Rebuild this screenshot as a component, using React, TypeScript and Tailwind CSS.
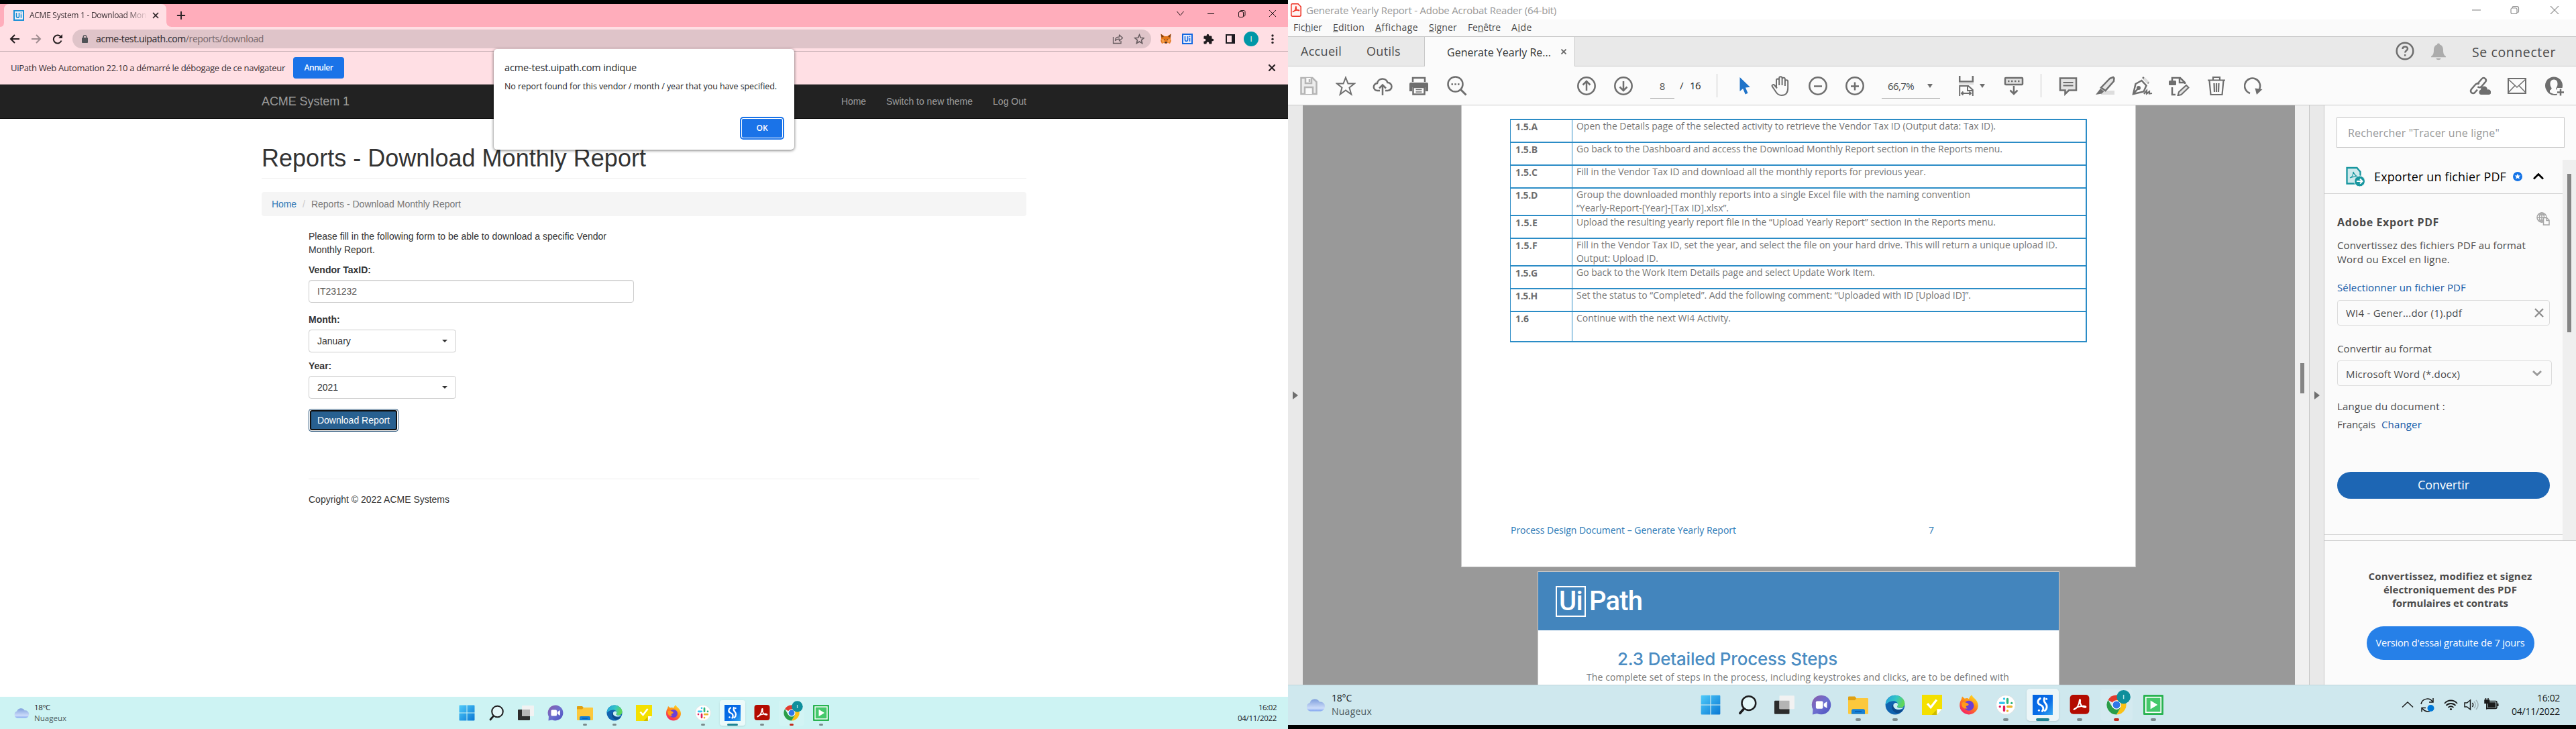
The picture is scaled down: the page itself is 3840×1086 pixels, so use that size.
import { useLayoutEffect, useRef, useState, type ReactNode } from "react";
import { X, Plus } from "lucide-react";

/* One line of text whose tracking is adjusted so that it spans `w` pixels. */
function T({ w, className = "", children }: { w: number; className?: string; children: ReactNode }) {
  const ref = useRef<HTMLSpanElement>(null);
  const [gap, setGap] = useState(0);
  useLayoutEffect(() => {
    const el = ref.current;
    if (!el) return;
    const n = Math.max(1, (el.textContent || "").length);
    setGap((w - el.getBoundingClientRect().width) / n);
  }, [w]);
  return (
    <span ref={ref} style={{ letterSpacing: gap }} className={"inline-block shrink-0 whitespace-nowrap " + className}>
      {children}
    </span>
  );
}

/* ---------- taskbar icons (24 unit grid) ---------- */
const ic = "h-full w-full block";
const StartIcon = () => (
  <svg viewBox="0 0 24 24" className={ic}>
    <defs>
      <linearGradient id="win" x1="0" y1="0" x2="1" y2="1">
        <stop offset="0" stopColor="#4fcbfa" />
        <stop offset="1" stopColor="#0a78d4" />
      </linearGradient>
    </defs>
    <path fill="url(#win)" d="M1.500.500h10v11h-11v-10a1 1 0 0 1 1-1zM12.500.500h10a1 1 0 0 1 1 1v10h-11zM.500 12.500h11v11h-10a1 1 0 0 1-1-1zM12.500 12.500h11v10a1 1 0 0 1-1 1h-10z" />
  </svg>
);
const SearchIcon = () => (
  <svg viewBox="0 0 24 24" className={ic} fill="none" stroke="#1d1d1f" strokeLinecap="round">
    <circle cx="13.500" cy="10" r="8.300" strokeWidth="2" fill="#e4f7f8" />
    <path d="M7.200 17.200l-4.200 4.800" strokeWidth="2.800" />
  </svg>
);
const TaskViewIcon = () => (
  <svg viewBox="0 0 24 24" className={ic}>
    <rect x="0" y="7" width="18" height="16" rx="1" fill="#2c2c2c" />
    <rect x="6" y="1" width="18" height="16" rx="1" fill="#f2f2f2" />
    <rect x="6" y="7" width="12" height="10" fill="#b4b4b4" />
  </svg>
);
const ChatIcon = () => (
  <svg viewBox="0 0 24 24" className={ic}>
    <defs>
      <linearGradient id="chat" x1="0" y1="0" x2="1" y2="1">
        <stop offset="0" stopColor="#8c5aa8" />
        <stop offset=".5" stopColor="#6d6fcf" />
        <stop offset="1" stopColor="#4a4fc0" />
      </linearGradient>
    </defs>
    <path fill="url(#chat)" d="M12 .5a11.500 11.500 0 1 1-5 21.900L1.500 23.500 2 17.500A11.500 11.500 0 0 1 12 .5z" />
    <rect x="5.500" y="7.500" width="8.500" height="9" rx="1.500" fill="#fff" />
    <path fill="#fff" d="M15 10.500l3.800-2.500v8L15 13.500z" />
  </svg>
);
const FolderIcon = () => (
  <svg viewBox="0 0 24 24" className={ic}>
    <path fill="#e0a011" d="M0 3a1 1 0 0 1 1-1h7l2.500 3L8 7H0z" />
    <path fill="#fcc83c" d="M0 6.500h8L10 4h13a1 1 0 0 1 1 1v17a1 1 0 0 1-1 1H1a1 1 0 0 1-1-1z" />
    <path fill="#1581d6" d="M4 23v-4a2 2 0 0 1 2-2h12a2 2 0 0 1 2 2v4z" />
    <path fill="#0b5cab" d="M8 19.500h8v1.300H8z" />
  </svg>
);
const EdgeIcon = () => (
  <svg viewBox="0 0 24 24" className={ic}>
    <defs>
      <linearGradient id="edge" x1="0" y1="0" x2="1" y2=".3">
        <stop offset="0" stopColor="#1f9fe0" />
        <stop offset=".6" stopColor="#35c7c4" />
        <stop offset="1" stopColor="#5fd65a" />
      </linearGradient>
    </defs>
    <circle cx="12" cy="12" r="11.500" fill="#1063b0" />
    <path fill="url(#edge)" d="M.6 12C.6 5.500 5.600.5 12 .5S23.500 5.300 23.500 10.200c0 3.400-2.500 5.300-5.600 5.300-2.300 0-3.900-.9-3.500-1.700.4-.7.900-1.200.9-2.400 0-2.100-2.200-4-5.200-4C5.200 7.400 1.600 10.600.6 12z" />
    <path fill="#0c4a8c" d="M8.500 11.500c-1.500 4 .5 8.500 5 10.200 3.500.6 6.500-1.700 8.300-4.200-5 2.300-10.800.5-11.600-4.800z" />
    <path fill="#cdf0f2" d="M12.500 9.600c-1.800.5-3 2-2.600 4 .5 3 4.600 4.600 8.200 3.800 1.600-.3 3.200-1 4.400-2.200-2.600 1-8.600 1-8.100-1.400.5-.8 1-1.300.9-2.400-.1-1-.9-2.100-2.800-1.800z" />
  </svg>
);
const NoteIcon = () => (
  <svg viewBox="0 0 24 24" className={ic}>
    <path fill="#f4e000" d="M0 0h24v17l-6 7H0z" />
    <path fill="#fff" d="M18 24v-7h6z" />
    <path fill="#cdbb00" d="M11.500 24l6-6v6z" />
    <path d="M6.500 10.500l4 4.500 7-9" fill="none" stroke="#fff" strokeWidth="2.600" />
  </svg>
);
const FirefoxIcon = () => (
  <svg viewBox="0 0 24 24" className={ic}>
    <defs>
      <linearGradient id="ff" x1=".8" y1="0" x2=".2" y2="1">
        <stop offset="0" stopColor="#ffe226" />
        <stop offset=".45" stopColor="#ff8a16" />
        <stop offset="1" stopColor="#f5156c" />
      </linearGradient>
    </defs>
    <path fill="url(#ff)" d="M3 5.500L4 2l3 2.500c2.500-.9 4-.3 5 .5C12.500 3 14 1 15.500 0c.3 3.500 7 5 7.500 12.500A11 11 0 1 1 1 12.500c0-3 .8-5.500 2-7z" />
    <circle cx="12" cy="13" r="6" fill="#6b3fd6" />
    <path fill="#ff9b1a" d="M3.500 9.500c3-1.500 5.500 0 7.500 1 1.500.7.500 2.500-1.500 2.700-1.500.3-1 2.300 1 2.800-3 1.500-8-.5-7-6.500z" />
  </svg>
);
const SlackIcon = () => (
  <svg viewBox="0 0 24 24" className={ic}>
    <circle cx="12" cy="12" r="11.500" fill="#fff" stroke="#d9d9d9" strokeWidth=".6" />
    <g strokeWidth="2.700" strokeLinecap="round">
      <path stroke="#36c5f0" d="M10 4.800v0M5.200 9.800h4.600" />
      <path stroke="#2eb67d" d="M14 5.200v4.600M19 9.900v0" />
      <path stroke="#ecb22e" d="M14 19.200v0M14.200 14.200h4.600" />
      <path stroke="#e01e5a" d="M10 14.200v4.600M5 14.100v0" />
    </g>
  </svg>
);
const StudioIcon = () => (
  <svg viewBox="0 0 24 24" className={ic}>
    <defs>
      <linearGradient id="st" x1="0" y1="0" x2="1" y2="1">
        <stop offset="0" stopColor="#0062e0" />
        <stop offset=".6" stopColor="#0a6fe8" />
        <stop offset="1" stopColor="#35a8f2" />
      </linearGradient>
    </defs>
    <rect width="24" height="24" fill="url(#st)" />
    <path d="M9 4.500C6 6 5 10.500 9 12s4.500 5 2.500 7.500M14 4c-1 3 0 5 1.500 6.500s2.500 6-1 8.500" fill="none" stroke="#fff" strokeWidth="2.300" strokeLinecap="round" />
    <circle cx="16.500" cy="5" r="1.200" fill="#fff" />
    <circle cx="7.500" cy="18.500" r="1.200" fill="#fff" />
  </svg>
);
const AcroMark = ({ color = "#fff", w = 1.6 }: { color?: string; w?: number }) => (
  <path d="M5.500 17.500c3-1 6-5.500 6.300-10.500.1-2 1.400-1.500 1 .3-1.200 3.700 2.700 8.200 6.200 7.700 1.500-.6-.3-2-3-1.600-4 .4-7.500 1.600-9.800 3.200-1 .8-1.200 1.200-.7.900z" fill="none" stroke={color} strokeWidth={w} strokeLinejoin="round" />
);
const AcrobatIcon = () => (
  <svg viewBox="0 0 24 24" className={ic}>
    <rect x=".5" y="0" width="23" height="23" rx="4" fill="#b30b00" />
    <AcroMark />
  </svg>
);
const ChromeIcon = () => (
  <svg viewBox="0 0 24 24" className={ic + " overflow-visible"}>
    <path fill="#e33b2e" d="M12 12L2 6.200A11.500 11.500 0 0 1 22 6.200z" />
    <path fill="#e33b2e" d="M12 .5a11.500 11.500 0 0 1 10 5.700H12z" />
    <path fill="#fbc116" d="M22 6.200A11.500 11.500 0 0 1 12 23.500l5-8.500-5-8.800z" />
    <path fill="#2a9d48" d="M2 6.200A11.500 11.500 0 0 0 12 23.500l5-8.600-10-.1z" />
    <circle cx="12" cy="12" r="5.500" fill="#fff" />
    <circle cx="12" cy="12" r="4.400" fill="#2f77e8" />
    <circle cx="20.500" cy="2.500" r="8.200" fill="#0e8f9c" />
    <path d="M20.500 0v5" stroke="#b5e3e6" strokeWidth="1.200" />
  </svg>
);
const AssistantIcon = () => (
  <svg viewBox="0 0 24 24" className={ic}>
    <rect width="24" height="24" rx="1" fill="#28b351" />
    <rect x="3" y="3" width="18" height="18" fill="#45c86b" stroke="#fff" strokeWidth="1.400" />
    <path fill="#fff" d="M8.500 6.800l8.500 5.200-8.500 5.200z" />
  </svg>
);

type Dot = "idle" | "active" | "alert";
const apps: { Icon: () => ReactNode; dot?: Dot; tile?: string }[] = [
  { Icon: StartIcon },
  { Icon: SearchIcon },
  { Icon: TaskViewIcon },
  { Icon: ChatIcon },
  { Icon: FolderIcon, dot: "idle" },
  { Icon: EdgeIcon, dot: "idle" },
  { Icon: NoteIcon },
  { Icon: FirefoxIcon },
  { Icon: SlackIcon, dot: "idle" },
  { Icon: StudioIcon, dot: "active", tile: "bg-white/60 shadow-sm" },
  { Icon: AcrobatIcon, dot: "idle" },
  { Icon: ChromeIcon, dot: "alert", tile: "bg-white/10" },
  { Icon: AssistantIcon, dot: "idle" },
];
const dotSmall: Record<Dot, string> = {
  idle: "h-[3px] w-1.5 bg-[#7b8a8c]",
  active: "h-[3px] w-4 bg-[#1f8494]",
  alert: "h-[3px] w-1.5 bg-[#c42b1c]",
};
const dotBig: Record<Dot, string> = {
  idle: "h-1 w-2 bg-[#7b8a8c]",
  active: "h-1 w-5 bg-[#1f8494]",
  alert: "h-1 w-2 bg-[#c42b1c]",
};

function AppIcons({ big = false }: { big?: boolean }) {
  return (
    <div className="flex h-full">
      {apps.map(({ Icon, dot, tile = "" }, i) => (
        <div key={i} className={big ? "flex w-[55px] justify-center pt-1.5" : "flex w-11 justify-center pt-[5px]"}>
          <div className={(big ? "h-12 w-12 rounded-[5px] pt-[9px] " : "h-[38px] w-[38px] rounded-[4px] pt-[7px] ") + "relative flex justify-center " + tile}>
            <div className={big ? "h-[30px] w-[30px]" : "h-6 w-6"}>
              <Icon />
            </div>
            {dot && <div className={"absolute bottom-0 rounded-full " + (big ? dotBig[dot] : dotSmall[dot])} />}
          </div>
        </div>
      ))}
    </div>
  );
}

const CloudWeather = ({ className }: { className: string }) => (
  <svg viewBox="0 0 30 20" className={className}>
    <defs>
      <linearGradient id="cl" x1="0" y1="0" x2="0" y2="1">
        <stop offset="0" stopColor="#7f9fdd" />
        <stop offset=".75" stopColor="#cdddfa" />
        <stop offset="1" stopColor="#7ea2ef" />
      </linearGradient>
    </defs>
    <path fill="url(#cl)" d="M7 19.500a6.500 6.500 0 0 1-.5-12.500A8 8 0 0 1 21 5.500a7 7 0 0 1 2 14z" />
  </svg>
);

/* ---------- browser ---------- */
const UiBadge = ({ fg, bg }: { fg: string; bg: string }) => (
  <svg viewBox="0 0 16 16" className="h-4 w-4 shrink-0">
    <rect x="1" y="1" width="14" height="14" fill={bg} stroke={fg} strokeWidth="2" />
    <path d="M4.500 4v5.200a2 2 0 0 0 4 0V4M11.500 6.300v5.500M11.500 3.500v1.500" fill="none" stroke={fg} strokeWidth="1.600" />
  </svg>
);

function TabStrip() {
  return (
    <div className="flex h-[34px] bg-[#ffadbb]">
      <div className="relative h-[34px] w-[256px]">
        <svg viewBox="0 0 256 34" className="absolute inset-0 h-full w-full">
          <path fill="#ffdfe4" d="M0 34c5 0 6-3 6-8V8c0-5 3-8 8-8h226c5 0 8 3 8 8v18c0 5 3 8 8 8z" />
        </svg>
        <div className="relative flex h-[34px] items-center pl-5">
          <UiBadge fg="#1a8fd6" bg="#f3eef5" />
          <div className="ml-2 w-[175px] overflow-hidden text-[12px] leading-[20px] text-[#3c3135] [mask-image:linear-gradient(to_right,#000_145px,transparent_176px)]">
            <T w={174}>ACME System 1 - Download Mon</T>
          </div>
          <X className="ml-[6px] h-[14px] w-[14px] text-[#2b2326]" strokeWidth={3} />
        </div>
      </div>
      <Plus className="ml-[5px] mt-2 h-[18px] w-[18px] text-[#2b2326]" strokeWidth={2.6} />
      <svg viewBox="0 0 160 12" className="ml-[1471px] mt-[8px] h-3 w-[160px]" fill="none" stroke="#1c1214">
        <path d="M4.500 3l5 6 5-6" />
        <path d="M50 6.500h10" />
        <rect x="96.500" y="3.500" width="7" height="8" rx="1.500" />
        <path d="M98.500 3.500c0-1.500.5-2 1.500-2h4c1 0 2 .5 2 2v5c0 1-.5 1.500-2 1.500" />
        <path d="M142 1l10 10M152 1l-10 10" />
      </svg>
    </div>
  );
}

function BrowserToolbar() {
  return (
    <div className="flex h-[37px] items-center border-b border-[#ccb3b8] bg-[#ffdfe4]">
      <svg viewBox="0 0 80 16" className="ml-[14px] h-4 w-20 shrink-0" fill="none" stroke="#221b1d" strokeWidth="2">
        <path d="M8 2L2 8l6 6M2 8h13" />
        <path d="M40 2l6 6-6 6M46 8H33" stroke="#a08d91" />
        <path d="M77.500 10.500A6 6 0 1 1 77 5.500" />
        <path d="M79 1v6h-6z" fill="#221b1d" stroke="none" />
      </svg>
      <div className="ml-[14px] flex h-7 w-[1608px] shrink-0 items-center rounded-full bg-[#dfc4c9] pl-[14px]">
        <svg viewBox="0 0 9 12" className="h-3 w-[9px]">
          <rect y="4" width="9" height="8" rx="1" fill="#4f5256" />
          <path d="M2.200 5V3a2.300 2.300 0 0 1 4.600 0v2" fill="none" stroke="#4f5256" strokeWidth="1.300" />
        </svg>
        <T w={250} className="ml-[12px] text-[14px] leading-6 text-[#74666a]">
          <span className="text-[#27262b]">acme-test.uipath.com</span>/reports/download
        </T>
        <svg viewBox="0 0 48 16" className="ml-[1265px] h-4 w-12" fill="none" stroke="#655a5e" strokeWidth="1.300">
          <path d="M1.500 5v9.500h11.500V11" />
          <path d="M4.500 10.500c0-4 2.500-5.500 6-5.500V2l5 4.500-5 4.500V8c-3 0-4.500 1-6 2.500z" strokeLinejoin="round" />
          <path d="M40.500 1.800l1.900 4.500 4.800.4-3.700 3.100 1.200 4.700-4.200-2.500-4.200 2.500 1.200-4.700-3.700-3.100 4.800-.4z" strokeWidth="1.600" />
        </svg>
      </div>
      <svg viewBox="0 0 16 16" className="ml-[14px] h-4 w-4 shrink-0">
        <path fill="#e2761b" d="M.5.5L6 4h4L15.500.5 15 7l.8 4L14 15l-3.500-1.200-1 1.200h-3l-1-1.200L2 15 .2 11 1 7z" />
        <path fill="#7a3f14" d="M.5.5L5 4.500 1.500 6zM15.500.5L11 4.500 14.500 6z" />
        <path fill="#f5a04e" d="M1 8l4 .5L6 13l-3 1zM15 8l-4 .5L10 13l3 1z" />
        <path fill="#2b2b38" d="M4.500 8.200l2 .3-.5 1zM11.500 8.200l-2 .3.500 1zM6.500 12.500h3v1.700h-3z" />
      </svg>
      <div className="ml-4">
        <UiBadge fg="#1467e0" bg="#e9edfb" />
      </div>
      <svg viewBox="0 0 24 24" className="ml-[15px] h-[17px] w-[17px] shrink-0" fill="#1f1b1e">
        <path d="M20.500 11H19V7c0-1.100-.9-2-2-2h-4V3.500a2.500 2.500 0 0 0-5 0V5H4c-1.100 0-2 .9-2 2v3.800h1.500a2.700 2.700 0 0 1 0 5.400H2V20c0 1.100.9 2 2 2h3.800v-1.500a2.700 2.700 0 0 1 5.400 0V22H17c1.100 0 2-.9 2-2v-4h1.500a2.500 2.500 0 0 0 0-5z" />
      </svg>
      <svg viewBox="0 0 14 14" className="ml-[17px] h-[14px] w-[14px] shrink-0">
        <path d="M1 1h12v12H1z" fill="none" stroke="#1c1a20" strokeWidth="2" />
        <path d="M9 0h5v14H9z" fill="#1c1a20" />
      </svg>
      <div className="ml-[13px] flex h-[22px] w-[22px] shrink-0 items-center justify-center rounded-full bg-[#0097a7] text-[11px] text-white">I</div>
      <svg viewBox="0 0 4 16" className="ml-[19px] h-4 w-1 shrink-0" fill="#241f22">
        <circle cx="2" cy="3" r="1.700" />
        <circle cx="2" cy="8.200" r="1.700" />
        <circle cx="2" cy="13.400" r="1.700" />
      </svg>
    </div>
  );
}

function Select({ value }: { value: string }) {
  return (
    <div className="flex h-[34px] w-[220px] items-center justify-between rounded-[4px] border border-[#ccc] bg-white pl-3 pr-3 text-[#333]">
      {value}
      <span className="border-x-4 border-t-4 border-x-transparent border-t-[#333]" />
    </div>
  );
}

function BrowserWindow() {
  return (
    <div className="relative flex h-[1086px] w-[1920px] shrink-0 flex-col bg-black pt-1.5">
      <TabStrip />
      <BrowserToolbar />
      <div className="flex h-[49px] items-center border-b border-[#ccb3b8] bg-[#ffdfe4] pl-4 text-[13px] text-[#3a3034]">
        <T w={409} className="leading-6">UiPath Web Automation 22.10 a démarré le débogage de ce navigateur</T>
        <div className="ml-3 flex h-8 w-[76px] items-center justify-center rounded-[4px] bg-[#1a73e8] text-[12px] font-semibold text-white">
          <T w={43}>Annuler</T>
        </div>
        <X className="ml-[1375px] h-4 w-4 text-[#241d20]" strokeWidth={3.2} />
      </div>
      <nav className="flex h-[51px] items-center border-b border-[#080808] bg-[#222] pl-[390px] font-['Liberation_Sans',Arial,sans-serif] text-sm text-[#9d9d9d]">
        <T w={131} className="text-lg leading-5">ACME System 1</T>
        <T w={37} className="ml-[733px]">Home</T>
        <T w={129} className="ml-[30px]">Switch to new theme</T>
        <T w={50} className="ml-[30px]">Log Out</T>
      </nav>
      <main className="h-[861px] bg-white pl-[390px] pt-[39px] font-['Liberation_Sans',Arial,sans-serif] text-sm leading-5 text-[#333]">
        <div className="h-[50px] w-[1140px] border-b border-[#eee]">
          <h1 className="text-[36px] leading-10">
            <T w={573}>Reports - Download Monthly Report</T>
          </h1>
        </div>
        <div className="mt-5 flex h-9 w-[1140px] items-center rounded-[4px] bg-[#f5f5f5] px-[15px] text-[#777]">
          <T w={37} className="text-[#337ab7]">Home</T>
          <span className="mx-[9px] text-[#ccc]">/</span>
          <T w={223}>Reports - Download Monthly Report</T>
        </div>
        <div className="ml-[70px] mt-5 w-[1000px]">
          <T w={444}>Please fill in the following form to be able to download a specific Vendor</T>
          <p>Monthly Report.</p>
          <p className="mt-2.5 font-bold"><T w={93}>Vendor TaxID:</T></p>
          <div className="mt-[5px] flex h-[34px] w-[485px] items-center rounded-[4px] border border-[#ccc] px-3 text-[#555] shadow-[inset_0_1px_1px_rgba(0,0,0,0.075)]">
            IT231232
          </div>
          <p className="mb-[5px] mt-[15px] font-bold">Month:</p>
          <Select value="January" />
          <p className="mb-[5px] mt-2.5 font-bold">Year:</p>
          <Select value="2021" />
          <div className="mt-[15px] h-[34px] w-[134px] rounded-[4px] border border-[#204d74] bg-white p-px">
            <div className="flex h-full items-center justify-center rounded-[3px] border-2 border-[#101010] bg-[#286090] text-white">
              <T w={108}>Download Report</T>
            </div>
          </div>
          <div className="mt-[70px] h-px bg-[#eee]" />
          <p className="mt-5"><T w={210}>Copyright © 2022 ACME Systems</T></p>
        </div>
      </main>
      <footer className="flex h-12 items-center bg-[#cdf3f3] text-[12px]">
        <div className="flex w-[674px] items-center pl-5">
          <CloudWeather className="h-4 w-6" />
          <div className="ml-[7px] flex flex-col items-start leading-4 text-[#1c2223]">
            <T w={24} className="text-[11.5px]">18°C</T>
            <T w={48} className="text-[11.5px] text-[#4b5a5b]">Nuageux</T>
          </div>
        </div>
        <AppIcons />
        <div className="ml-auto flex flex-col items-end pr-[17px] leading-4 text-[#1c2223]">
          <T w={27} className="text-[11.5px]">16:02</T>
          <T w={58} className="text-[11.5px]">04/11/2022</T>
        </div>
      </footer>

      <div className="absolute left-[736px] top-[73px] flex h-[150px] w-[448px] flex-col items-start rounded-[5px] bg-white px-4 pt-[17px] text-[#26272a] shadow-[0_1px_4px_rgba(0,0,0,0.6)]">
        <T w={197} className="text-[14.5px] leading-[22px]">acme-test.uipath.com indique</T>
        <T w={406} className="mt-[6px] text-[12.5px] leading-[22px]">No report found for this vendor / month / year that you have specified.</T>
        <div className="ml-auto mr-[-1px] mt-[34px] h-[34px] w-[66px] rounded-[5px] border-2 border-[#1a73e8] bg-white p-px">
          <div className="flex h-full items-center justify-center rounded-[2px] bg-[#1a73e8] text-[12px] font-semibold text-white">
            <T w={17}>OK</T>
          </div>
        </div>
      </div>
    </div>
  );
}

/* ---------- PDF reader ---------- */
const tb = "shrink-0 block";
const G = "#6e6e6e";
const stroke = { fill: "none", stroke: G, strokeWidth: 2.5 };

function ReaderToolbar() {
  return (
    <div className="flex h-[58px] items-center border-b border-[#c8c8c8] bg-[#fbfbfb]">
      <svg viewBox="0 0 26 28" className={tb + " ml-[18px] h-7 w-[26px]"} fill="none" stroke="#b5b5b5" strokeWidth="2.500">
        <path d="M1.500 2h17l6 6v18h-23z" fill="#ededed" />
        <path d="M8 2v8h9V2M14 4v4M7 26V16h12v10" fill="#fbfbfb" />
      </svg>
      <svg viewBox="0 0 30 30" className={tb + " ml-[27px] h-[30px] w-[30px]"} {...stroke} strokeWidth="2">
        <path d="M15 2.500l3.500 9h9.500l-7.500 6 2.800 10L15 21.500l-8.300 6 2.800-10L2 11.500h9.500z" />
      </svg>
      <svg viewBox="0 0 30 30" className={tb + " ml-[25px] h-[30px] w-[30px]"} {...stroke}>
        <path d="M11 22H7.500a5.500 5.500 0 0 1-.5-11 8 8 0 0 1 15.500-1A6 6 0 0 1 22.500 22H19" />
        <path d="M15 29V14M10 18.500l5-5 5 5" />
      </svg>
      <svg viewBox="0 0 28 28" className={tb + " ml-[25px] h-7 w-7"}>
        <path d="M5 8V2h18v6" {...stroke} />
        <path d="M0 11a2 2 0 0 1 2-2h24a2 2 0 0 1 2 2v11h-4v-6H4v6H0z" fill={G} />
        <path d="M5.500 16h17v10.500h-17z" {...stroke} />
        <path d="M9.500 19.500h9M9.500 23h9" stroke={G} strokeWidth="1.500" />
      </svg>
      <svg viewBox="0 0 30 30" className={tb + " ml-[28px] h-[30px] w-[30px]"} {...stroke}>
        <circle cx="12.500" cy="12.500" r="11" />
        <path d="M20.500 20.500l8 8" strokeWidth="3" />
        <path d="M6.500 12.500h2.500M11.300 12.500h2.500M16 12.500h2.500" strokeWidth="2.600" />
      </svg>
      <svg viewBox="0 0 30 30" className={tb + " ml-[163px] h-[30px] w-[30px]"} {...stroke}>
        <circle cx="15" cy="15" r="12.700" />
        <path d="M15 22V9M9.500 13.500L15 8l5.500 5.500" />
      </svg>
      <svg viewBox="0 0 30 30" className={tb + " ml-[25px] h-[30px] w-[30px]"} {...stroke}>
        <circle cx="15" cy="15" r="12.700" />
        <path d="M15 8v13M9.500 16.500L15 22l5.500-5.500" />
      </svg>
      <div className="ml-[25px] mt-[2px] flex h-9 w-9 shrink-0 items-center justify-center border-b border-[#b5b5b5] pb-2 pt-2 text-[15px] text-[#555]">
        8
      </div>
      <span className="ml-2 w-[6px] text-[15px] text-[#333]">/</span>
      <T w={16} className="ml-[9px] text-[15px] text-[#222]">16</T>
      <div className="ml-[24px] h-[35px] w-px shrink-0 bg-[#c4c4c4]" />
      <svg viewBox="0 0 18 28" className={tb + " ml-[32px] h-7 w-[18px]"}>
        <path d="M1.500 1v21l4.700-4 3.500 8.500 3.800-1.700L10 16.500l6.800-.7z" fill="#2074c9" />
      </svg>
      <svg viewBox="0 0 30 30" className={tb + " ml-[30px] h-[30px] w-[30px]"} {...stroke} strokeWidth="2">
        <path d="M8 16.500V6.500a2 2 0 0 1 4.200 0V14M12.200 14V3.500a2 2 0 0 1 4.400 0V14M16.600 14V5a2 2 0 0 1 4.300 0v10M20.900 15V8.500a2 2 0 0 1 4.300 0V18c0 7-3.500 11-9.500 11-5 0-7-2.500-9-6l-5-7.500c-.8-2 2-3.300 3.500-1.500L9 18.500" />
      </svg>
      <svg viewBox="0 0 30 30" className={tb + " ml-[25px] h-[30px] w-[30px]"} {...stroke}>
        <circle cx="15" cy="15" r="12.700" />
        <path d="M9 15.500h12" />
      </svg>
      <svg viewBox="0 0 30 30" className={tb + " ml-[25px] h-[30px] w-[30px]"} {...stroke}>
        <circle cx="15" cy="15" r="12.700" />
        <path d="M9 15.500h12M15 9.500v12" />
      </svg>
      <div className="ml-[25px] mt-[2px] flex h-9 w-[87px] shrink-0 items-center border-b border-[#b5b5b5] pl-[9px] text-[15px] text-[#4a4a4a]">
        <T w={39}>66,7%</T>
        <span className="ml-[20px] border-x-[4.5px] border-t-[6px] border-x-transparent border-t-[#6e6e6e]" />
      </div>
      <svg viewBox="0 0 24 30" className={tb + " ml-[27px] h-[30px] w-6"} {...stroke}>
        <path d="M2.200 0v8.500h19.600V0" />
        <path d="M1 11h22v2H1z" fill="#ddd" stroke="none" />
        <path d="M2.200 30V15h13l6.600 6v9M14 15v7h8M5 26h14M7.500 23.500L5 26l2.500 2.500M16.500 23.500L19 26l-2.500 2.500" strokeWidth="2" />
      </svg>
      <span className="ml-2 border-x-4 border-t-[6px] border-x-transparent border-t-[#6e6e6e]" />
      <svg viewBox="0 0 30 30" className={tb + " ml-[28px] h-[30px] w-[30px]"} {...stroke}>
        <rect x="2" y="3" width="26" height="10" rx="1" fill="#e0e0e0" />
        <path d="M6 8h2.500M11 8h2.500M16 8h2.500M21 8h2.500" />
        <path d="M15 15v12M9.500 21.500L15 27l5.500-5.500" />
      </svg>
      <div className="ml-[25px] h-[35px] w-px shrink-0 bg-[#c4c4c4]" />
      <svg viewBox="0 0 28 30" className={tb + " ml-[26px] h-[30px] w-7"} {...stroke}>
        <path d="M2 3.500h24v18H15L9.500 27v-5.500H2z" fill="#e4e4e4" />
        <path d="M6.500 10h15M6.500 14.500h15" strokeWidth="1.800" />
      </svg>
      <svg viewBox="0 0 30 30" className={tb + " ml-[26px] h-[30px] w-[30px]"} {...stroke}>
        <path d="M9 28v-2l6-4h14v6z" fill="#ddd" stroke="none" />
        <path d="M22 4l5-2 1.500 1.500L28 8 15.500 22 9 17.500z" fill="#e4e4e4" />
        <path d="M8 19l5.500 4-3.500 3.500-9 1.500z" fill={G} stroke="none" />
      </svg>
      <svg viewBox="0 0 32 30" className={tb + " ml-[24px] h-[30px] w-8"} {...stroke}>
        <path d="M17 2l9 9" />
        <path d="M18 5l5 6 4-2-7-7z" fill="#ddd" stroke="none" />
        <path d="M15.500 7l7 7.500-4 9L3 27 6.500 12z" />
        <path d="M3 27l7-8" />
        <circle cx="11" cy="18" r="1.800" fill={G} />
        <path d="M19 27l4-5v4.500l4-3v3l4-.5" strokeWidth="2.200" />
      </svg>
      <svg viewBox="0 0 32 30" className={tb + " ml-[23px] h-[30px] w-8"} {...stroke}>
        <path d="M6 8V3h12l7 7v2M17 3v7h8M6 17v11h5" />
        <rect x="1" y="7" width="11" height="7" rx="1.500" fill={G} stroke="none" />
        <path d="M16 24l11-10 3.500 3.500L19.500 28l-5 1.200z" fill="#e4e4e4" strokeWidth="2" />
      </svg>
      <svg viewBox="0 0 28 30" className={tb + " ml-[26px] h-[30px] w-7"} {...stroke}>
        <path d="M1 6.500h26M9 6V2h10v4M3.500 7l2 21h17l2-21M10.500 11l.5 13M14 11v13M17.500 11l-.5 13" strokeWidth="2.200" />
      </svg>
      <svg viewBox="0 0 28 28" className={tb + " ml-[27px] h-7 w-7"} {...stroke}>
        <path d="M9 25A11.500 11.500 0 1 1 23 19" />
        <path d="M16.500 17.500l11 1.500-8.500 8z" fill={G} stroke="none" />
      </svg>
      <svg viewBox="0 0 32 30" className={tb + " ml-[308px] h-[30px] w-8"} {...stroke}>
        <path d="M12 12l6.500-7.500c3-3.500 8.500.5 5.500 4.500l-6 7c-2 2-4.500 1.500-5.500 0" />
        <path d="M14.500 12.500c-1-1.500-3.500-1.500-5.500.5l-6 7c-3 4 2.500 8.500 5.500 4.500l3.500-4" />
        <path d="M17 28a4 4 0 0 1 0-7.500 5 5 0 0 1 10 0 3.800 3.800 0 0 1 2.500 7.500z" fill={G} stroke="none" />
      </svg>
      <svg viewBox="0 0 30 24" className={tb + " ml-[24px] h-6 w-[30px]"} {...stroke} strokeWidth="2">
        <rect x="2" y="1" width="26" height="22" />
        <path d="M2 2l13 12L28 2M2 22l10-10.500M28 22l-10-10.500" strokeWidth="1.500" />
      </svg>
      <svg viewBox="0 0 30 30" className={tb + " ml-[26px] h-[30px] w-[30px]"}>
        <circle cx="14" cy="14.500" r="13" fill={G} />
        <path d="M14 5.500c4 0 5.500 3 5.500 6.500 0 3-1 4.500-2 6-.5 1.500.5 2.500 2.500 3.500v8H8v-8c2-1 3-2 2.500-3.500-1-1.500-2-3-2-6 0-3.500 1.500-6.500 5.500-6.500z" fill="#fbfbfb" />
        <path d="M5 23c5 6 13 6 17 3" {...stroke} strokeWidth="2" />
        <path d="M19 18h11v12H19z" fill="#fbfbfb" />
        <path d="M24 19.500v10M19 24.500h10" {...stroke} />
      </svg>
    </div>
  );
}

const steps: { id: string; h: string; lines: [string, number][] }[] = [
  { id: "1.5.A", h: "h-[34px]", lines: [["Open the Details page of the selected activity to retrieve the Vendor Tax ID (Output data: Tax ID).", 625]] },
  { id: "1.5.B", h: "h-[34px]", lines: [["Go back to the Dashboard and access the Download Monthly Report section in the Reports menu.", 635]] },
  { id: "1.5.C", h: "h-[34px]", lines: [["Fill in the Vendor Tax ID and download all the monthly reports for previous year.", 521]] },
  { id: "1.5.D", h: "h-[41px]", lines: [["Group the downloaded monthly reports into a single Excel file with the naming convention", 587], ["“Yearly-Report-[Year]-[Tax ID].xlsx”.", 227]] },
  { id: "1.5.E", h: "h-[34px]", lines: [["Upload the resulting yearly report file in the “Upload Yearly Report” section in the Reports menu.", 625]] },
  { id: "1.5.F", h: "h-[41px]", lines: [["Fill in the Vendor Tax ID, set the year, and select the file on your hard drive. This will return a unique upload ID.", 717], ["Output: Upload ID.", 122]] },
  { id: "1.5.G", h: "h-[34px]", lines: [["Go back to the Work Item Details page and select Update Work Item.", 445]] },
  { id: "1.5.H", h: "h-[34px]", lines: [["Set the status to “Completed”. Add the following comment: “Uploaded with ID [Upload ID]”.", 588]] },
  { id: "1.6", h: "h-[45px]", lines: [["Continue with the next WI4 Activity.", 230]] },
];

function DocumentView() {
  return (
    <div className="h-[863px] w-[1479px] shrink-0 overflow-hidden bg-[#999]">
      <div className="ml-[236px] flex h-[688px] w-[1006px] flex-col border-x border-b border-[#c9c9c9] bg-white pl-[72px] pt-5">
        <div className="w-[860px] border-l border-r-2 border-t-2 border-[#2b8cc6] text-[14px] leading-5 text-[#767676]">
          {steps.map((s) => (
            <div key={s.id} className={"flex border-b-2 border-[#2b8cc6] " + s.h}>
              <div className="w-[92px] shrink-0 border-r border-[#2b8cc6] pl-[7px] font-bold text-[#6e6e6e]">
                <T w={s.id === "1.6" ? 20 : 33} className="-mt-px">{s.id}</T>
              </div>
              <div className="-mt-px flex flex-col items-start pl-[6px]">
                {s.lines.map(([text, w]) => (
                  <T key={text} w={w}>{text}</T>
                ))}
              </div>
            </div>
          ))}
        </div>
        <div className="mt-[270px] flex pl-px text-[14px] leading-5 text-[#2a78b5]">
          <T w={336}>Process Design Document – Generate Yearly Report</T>
          <span className="ml-[287px]">7</span>
        </div>
      </div>
      <div className="ml-[350px] mt-[6px] flex h-[180px] w-[778px] flex-col border border-[#c9c9c9] bg-white">
        <div className="flex h-[87px] shrink-0 items-center bg-[#4385bd] pl-[26px] font-['Roboto','Open_Sans',sans-serif] text-white">
          <div className="flex h-[46px] w-[45px] items-center justify-center border-2 border-white text-[40px] font-medium leading-none">
            <T w={35}>Ui</T>
          </div>
          <T w={79} className="ml-[5px] text-[40px] font-medium leading-none">Path</T>
        </div>
        <h2 className="mt-[26px] pl-[118px] font-['Inter',sans-serif] text-[26px] font-medium leading-[34px] text-[#4a8cc2]">
          <T w={328}>2.3 Detailed Process Steps</T>
        </h2>
        <p className="pl-[72px] text-[14px] leading-5 text-[#767676]">
          <T w={630}>The complete set of steps in the process, including keystrokes and clicks, are to be defined with</T>
        </p>
      </div>
    </div>
  );
}

function ExportPanel() {
  return (
    <aside className="flex h-[863px] w-[375px] shrink-0 flex-col bg-[#fbfbfb] text-[15px] text-[#4b4b4b]">
      <div className="ml-[18px] mt-[18px] flex h-[45px] w-[340px] items-center border border-[#c6c6c6] bg-white pl-[16px] text-[16px] text-[#999]">
        <T w={226}>Rechercher "Tracer une ligne"</T>
      </div>
      <div className="mt-[18px] flex h-[567px]">
        <div className="w-[355px] shrink-0">
          <div className="flex h-[51px] items-center border-b border-[#cfcfcf] pl-8">
            <svg viewBox="0 0 28 30" className="h-[30px] w-7">
              <path d="M1.500 2h15l5 6v17.500h-20z" fill="#cfe9ec" stroke="#17969f" strokeWidth="2.300" />
              <path d="M6 17c3-1 5-5 5-9 1.500 4 3 6 7 7.500-4-.8-8-.3-12 1.500z" fill="none" stroke="#17969f" strokeWidth="1.200" />
              <circle cx="20.500" cy="22" r="8" fill="#17969f" stroke="#fbfbfb" />
              <path d="M16 22h8M21 18.500l3.500 3.500-3.500 3.500" fill="none" stroke="#fff" strokeWidth="2" />
            </svg>
            <T w={197} className="ml-[14px] text-[18px] text-black">Exporter un fichier PDF</T>
            <svg viewBox="0 0 14 14" className="ml-[10px] h-[14px] w-[14px]">
              <circle cx="7" cy="7" r="7" fill="#1473e6" />
              <path d="M7 2.500l1.200 3h3.200L8.900 7.500l1 3.300L7 8.900l-2.900 1.900 1-3.300-2.500-2h3.200z" fill="#fff" />
            </svg>
            <svg viewBox="0 0 16 10" className="ml-4 h-2.5 w-4" fill="none" stroke="#000" strokeWidth="2.800">
              <path d="M1 8.500l7-7 7 7" />
            </svg>
          </div>
          <div className="flex flex-col items-start pl-[19px]">
            <div className="mt-[30px] flex h-6 items-center">
              <T w={152} className="text-[16px] font-bold leading-6">Adobe Export PDF</T>
              <svg viewBox="0 0 20 20" className="-mt-[10px] ml-[145px] h-5 w-5" fill="none" stroke="#a6a6a6" strokeWidth="1.500">
                <circle cx="8" cy="8" r="7" />
                <path d="M1 8h14M8 1v14M3 4h10M3 12h8" />
                <ellipse cx="8" cy="8" rx="3.500" ry="7" />
                <path d="M10.500 8.500h5l3.500 3.500v7h-8.500z" fill="#fbfbfb" />
                <path d="M15 9v3.500h4" />
              </svg>
            </div>
            <T w={281} className="mt-3 leading-[21px]">Convertissez des fichiers PDF au format</T>
            <T w={168} className="leading-[21px]">Word ou Excel en ligne.</T>
            <T w={192} className="mt-[21px] leading-[21px] text-[#0d57a6]">Sélectionner un fichier PDF</T>
            <div className="mt-[8px] flex h-[38px] w-[317px] items-center rounded-[4px] border border-[#dcdcdc] pl-3">
              <T w={173}>WI4 - Gener...dor (1).pdf</T>
              <svg viewBox="0 0 14 14" className="ml-[108px] h-[14px] w-[14px]" stroke="#8d8d8d" strokeWidth="2.400">
                <path d="M1 1l12 12M13 1L1 13" />
              </svg>
            </div>
            <T w={141} className="mt-6 leading-[21px]">Convertir au format</T>
            <div className="mt-[7px] flex h-[38px] w-[320px] items-center rounded-[4px] border border-[#dcdcdc] pl-3">
              <T w={170} className="pt-0.5">Microsoft Word (*.docx)</T>
              <svg viewBox="0 0 14 8" className="ml-[108px] h-2 w-[14px]" fill="none" stroke="#999" strokeWidth="2.800">
                <path d="M1 1l6 5.500L13 1" />
              </svg>
            </div>
            <T w={161} className="mt-[20px] leading-[21px]">Langue du document :</T>
            <div className="mt-[6px] flex leading-[21px]">
              <T w={57}>Français</T>
              <T w={60} className="ml-[9px] text-[#0d57a6]">Changer</T>
            </div>
            <div className="mt-[60px] flex h-10 w-[317px] items-center justify-center rounded-full bg-[#1d66b4] pb-px text-[18px] text-white">
              <T w={77}>Convertir</T>
            </div>
          </div>
          <div className="mt-[53px] h-px bg-[#cfcfcf]" />
        </div>
        <div className="w-5 bg-[#efefef] pl-[7px] pt-[21px]">
          <div className="h-[236px] w-[6px] bg-[#858585]" />
        </div>
      </div>
      <div className="flex flex-1 flex-col items-center border-t border-[#c6c6c6] pt-[42px] font-bold leading-5">
        <T w={244}>Convertissez, modifiez et signez</T>
        <T w={199}>électroniquement des PDF</T>
        <T w={173}>formulaires et contrats</T>
        <div className="mt-[25px] flex h-[50px] w-[250px] items-center justify-center rounded-full bg-[#2680e8] font-normal text-white">
          <T w={222} className="text-[14.5px]">Version d'essai gratuite de 7 jours</T>
        </div>
      </div>
    </aside>
  );
}

function ReaderWindow() {
  return (
    <div className="flex h-[1086px] w-[1920px] shrink-0 flex-col bg-black">
      <div className="flex h-[29px] items-center bg-white pl-[4px] text-[15px] text-[#999]">
        <svg viewBox="0 0 16 20" className="h-5 w-4">
          <path d="M2 .8h9l4.200 4.200v12.200a2 2 0 0 1-2 2H2.800a2 2 0 0 1-2-2V2.500A1.800 1.800 0 0 1 2 .8z" fill="#fff3f1" stroke="#ee2a1c" strokeWidth="1.500" />
          <g transform="translate(-.2 1) scale(.66)">
            <AcroMark color="#ee2a1c" w={2} />
          </g>
        </svg>
        <T w={373} className="ml-[7px] leading-6">Generate Yearly Report - Adobe Acrobat Reader (64-bit)</T>
        <svg viewBox="0 0 130 12" className="ml-[1365px] h-3 w-[130px] shrink-0" fill="none" stroke="#929292" strokeWidth="1.200">
          <path d="M0 6h13" />
          <rect x="58" y="3" width="9" height="8.500" rx="2" />
          <path d="M60 3c0-1.500 1-2.400 2-2.400h5c1.500 0 2.500 1 2.500 2.400v5c0 1-.5 1.500-2 1.800" />
          <path d="M117 0l12 12M129 0l-12 12" />
        </svg>
      </div>
      <div className="flex h-[26px] items-center border-b border-[#c8c8c8] bg-[#fafafa] pb-px pl-2 text-[14px] leading-5 text-[#4a4a4a]">
        <T w={43}>Fic<u>h</u>ier</T>
        <T w={47} className="ml-4"><u>E</u>dition</T>
        <T w={64} className="ml-4"><u>A</u>ffichage</T>
        <T w={42} className="ml-4"><u>S</u>igner</T>
        <T w={49} className="ml-4">Fe<u>n</u>être</T>
        <T w={31} className="ml-4">A<u>i</u>de</T>
      </div>
      <div className="flex h-11 bg-[#e9e9e9] text-[18px] text-[#4b4b4b]">
        <div className="flex w-[203px] shrink-0 items-center border-b border-[#c8c8c8] pl-[19px]">
          <T w={61}>Accueil</T>
          <T w={51} className="ml-[37px]">Outils</T>
        </div>
        <div className="flex w-[225px] shrink-0 items-center border-x border-[#c8c8c8] bg-[#fbfbfb] pl-[33px] text-[16px] text-[#333]">
          <T w={155} className="pt-0.5">Generate Yearly Re...</T>
          <svg viewBox="0 0 8 8" className="ml-[15px] h-2 w-2 shrink-0" stroke="#666" strokeWidth="1.800">
            <path d="M.5.5l7 7M7.500.5l-7 7" />
          </svg>
        </div>
        <div className="flex flex-1 items-center justify-end border-b border-[#c8c8c8] pr-[30px]">
          <svg viewBox="0 0 28 28" className="-mt-0.5 h-7 w-7" {...stroke}>
            <circle cx="14" cy="14" r="12.300" />
            <path d="M10.500 11c0-5 7.500-4.500 7.500-.5 0 3-3.700 2.700-3.700 6M14.200 19v2.500" />
          </svg>
          <svg viewBox="0 0 22 26" className="ml-[25px] h-[26px] w-[22px]" fill="#acacac">
            <path d="M11 .5c1.200 0 2 .8 2 2 3.500 1 5 4 5 8 0 5 1 7.500 4 9.500v1.200H0V20c3-2 4-4.500 4-9.500 0-4 1.500-7 5-8 0-1.200.8-2 2-2zM7.500 23h7c-.5 3-6.500 3-7 0z" />
          </svg>
          <T w={125} className="ml-[39px] pt-0.5 text-[19.5px] font-medium leading-6">Se connecter</T>
        </div>
      </div>
      <ReaderToolbar />
      <div className="flex h-[863px]">
        <div className="flex w-[22px] shrink-0 items-center justify-center bg-[#e9e9e9]">
          <span className="border-y-[6px] border-l-[8px] border-y-transparent border-l-[#6e6e6e]" />
        </div>
        <DocumentView />
        <div className="w-[21px] shrink-0 bg-[#f0f0f0] pl-2 pt-[384px]">
          <div className="h-[45px] w-[6px] bg-[#858585]" />
        </div>
        <div className="flex w-[23px] shrink-0 items-center justify-center border-x border-[#c6c6c6] bg-[#e9e9e9]">
          <span className="border-y-[6px] border-l-[8px] border-y-transparent border-l-[#6e6e6e]" />
        </div>
        <ExportPanel />
      </div>
      <div className="flex h-[60px] items-center bg-[#cfe8ee] shadow-[inset_0_1px_0_#bfd5da]">
        <div className="flex w-[602px] items-center pl-[26px]">
          <CloudWeather className="h-5 w-[30px]" />
          <div className="ml-[9px] flex flex-col items-start text-[14px] leading-5 text-[#16191a]">
            <T w={30}>18°C</T>
            <T w={60} className="text-[#4b5a5e]">Nuageux</T>
          </div>
        </div>
        <AppIcons big />
        <svg viewBox="0 0 150 24" className="ml-[339px] h-6 w-[150px] shrink-0" fill="none" stroke="#1b1b1b" strokeWidth="1.500">
          <path d="M5 15.500L13 8l8 7.500" />
          <path d="M33 11a9.500 9.500 0 0 1 17-4M51 2v6h-6M46 21.500c-4 1-8 0-11-4M34 22.500v-6h6" />
          <circle cx="47.500" cy="17" r="5" fill="#0078d7" stroke="none" />
          <path d="M68 10c5-6 14-6 19 0M70.500 13c4-4 10-4 14 0M73.500 16c2.500-2.200 5.500-2.200 8 0" strokeWidth="1.800" />
          <circle cx="77.500" cy="18.500" r="1.600" fill="#1b1b1b" stroke="none" />
          <path d="M98 9h3.500l5-4v14l-5-4H98z" />
          <path d="M109.500 9c1.500 2 1.500 4 0 6" />
          <path d="M112 7c3 3 3 7 0 10M115 5c4 4 4 10 0 14" stroke="#9fb0b4" />
          <rect x="131" y="6.500" width="15" height="11" rx="2" />
          <rect x="133.500" y="9" width="10" height="6.500" fill="#1b1b1b" />
          <path d="M147.500 10v4" strokeWidth="2" />
          <path d="M128 5h6.500v4.500h-6.500zM129.500 2v3M133 2v3M131 9v9h-1" fill="#1b1b1b" />
        </svg>
        <div className="ml-auto flex flex-col items-end pr-6 text-[14px] leading-5 text-[#16191a]">
          <T w={34}>16:02</T>
          <T w={72}>04/11/2022</T>
        </div>
      </div>
    </div>
  );
}

export default function App() {
  return (
    <div className="flex h-[1086px] w-[3840px] overflow-hidden font-['Open_Sans','Noto_Sans',sans-serif]">
      <BrowserWindow />
      <ReaderWindow />
    </div>
  );
}
